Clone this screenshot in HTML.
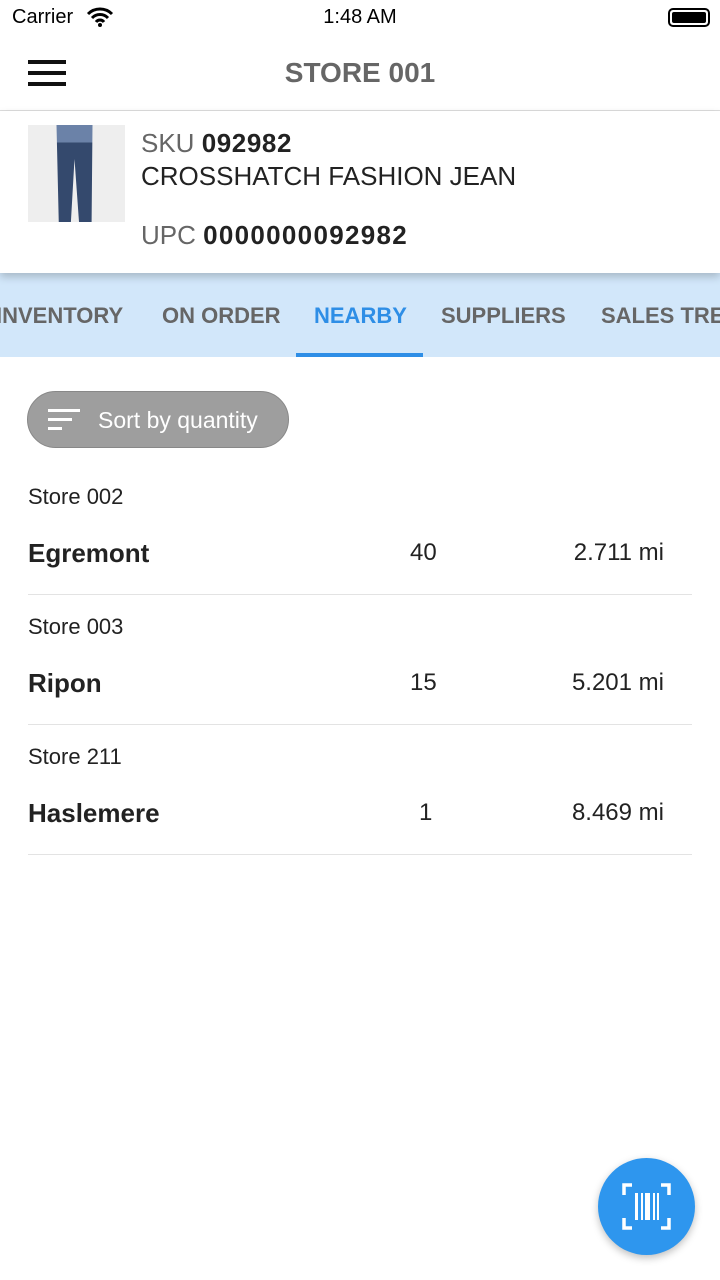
<!DOCTYPE html><html><head><meta charset="utf-8"><style>
*{margin:0;padding:0;box-sizing:border-box}
body{width:720px;height:1280px;overflow:hidden;background:#fff;font-family:"Liberation Sans",sans-serif;position:relative}
.abs{position:absolute}
</style></head><body>
<div class="abs" style="left:12px;top:6px;font-size:20px;color:#000">Carrier</div>
<svg class="abs" style="left:86px;top:6px" width="28" height="22" viewBox="0 0 28 22"><path d="M2 8a17 17 0 0 1 24 0M6 12a11 11 0 0 1 16 0M10 16a5 5 0 0 1 8 0" stroke="#000" stroke-width="3" fill="none"/><circle cx="14" cy="19" r="2" fill="#000"/></svg>
<div class="abs" style="left:0;width:720px;text-align:center;top:6px;font-size:20px;color:#000">1:48 AM</div>
<div class="abs" style="left:668px;top:8px;width:42px;height:19px;border:2px solid #000;border-radius:5px;padding:2px"><div style="width:100%;height:100%;background:#000;border-radius:2px"></div></div>
<div class="abs" style="left:28px;top:60px;width:38px;height:4px;background:#111;box-shadow:0 11px 0 #111,0 22px 0 #111"></div>
<div class="abs" style="left:0;width:720px;text-align:center;top:57px;font-size:28px;font-weight:bold;color:#666">STORE 001</div>
<div class="abs" style="left:0;top:110px;width:720px;height:1px;background:#ddd"></div>
<div class="abs" style="left:0;top:111px;width:720px;height:162px;background:#fff;box-shadow:0 4px 8px rgba(0,0,0,.2);z-index:2">
<div class="abs" style="left:28px;top:14px;width:97px;height:97px;background:#eee"><div class="abs" style="left:24px;top:0;width:45px;height:97px;background:linear-gradient(#6b82a8 0 18%,#34496d 18%);clip-path:polygon(10% 0,90% 0,88% 100%,60% 100%,50% 35%,42% 100%,15% 100%)"></div></div>
<div class="abs" style="left:141px;top:17px;font-size:26px;color:#666">SKU <b style="color:#222;letter-spacing:.6px">092982</b></div>
<div class="abs" style="left:141px;top:50px;font-size:26px;color:#222">CROSSHATCH FASHION JEAN</div>
<div class="abs" style="left:141px;top:109px;font-size:26px;color:#666">UPC <b style="color:#222;letter-spacing:1.3px">0000000092982</b></div>
</div>
<div class="abs" style="left:0;top:273px;width:720px;height:84px;background:#d2e7fa;font-size:22px;font-weight:bold;color:#666;overflow:hidden">
<div class="abs" style="left:-4px;top:30px">INVENTORY</div>
<div class="abs" style="left:162px;top:30px">ON ORDER</div>
<div class="abs" style="left:314px;top:30px;color:#2e8ee6">NEARBY</div>
<div class="abs" style="left:441px;top:30px">SUPPLIERS</div>
<div class="abs" style="left:601px;top:30px;white-space:nowrap">SALES TREND</div>
<div class="abs" style="left:296px;top:80px;width:127px;height:4px;background:#2e8ee6"></div>
</div>
<div class="abs" style="left:27px;top:391px;width:262px;height:57px;border-radius:29px;background:#9e9e9e;border:1px solid #888">
<div class="abs" style="left:20px;top:17px;width:32px;height:3px;background:#fff"></div>
<div class="abs" style="left:20px;top:26px;width:24px;height:3px;background:#fff"></div>
<div class="abs" style="left:20px;top:35px;width:14px;height:3px;background:#fff"></div>
<div class="abs" style="left:70px;top:15px;font-size:23px;color:#fff">Sort by quantity</div>
</div>
<div class="abs" style="left:28px;top:484px;width:664px">
<div style="height:111px;border-bottom:1px solid #e3e3e3;position:relative"><div class="abs" style="top:0;font-size:22px;color:#222">Store 002</div><div class="abs" style="top:54px;font-size:26px;font-weight:bold;color:#222">Egremont</div><div class="abs" style="top:55px;left:382px;font-size:24px;color:#222">40</div><div class="abs" style="top:55px;right:28px;font-size:24px;color:#222">2.711 mi</div></div>
<div style="height:130px;border-bottom:1px solid #e3e3e3;position:relative"><div class="abs" style="top:19px;font-size:22px;color:#222">Store 003</div><div class="abs" style="top:73px;font-size:26px;font-weight:bold;color:#222">Ripon</div><div class="abs" style="top:74px;left:382px;font-size:24px;color:#222">15</div><div class="abs" style="top:74px;right:28px;font-size:24px;color:#222">5.201 mi</div></div>
<div style="height:130px;border-bottom:1px solid #e3e3e3;position:relative"><div class="abs" style="top:19px;font-size:22px;color:#222">Store 211</div><div class="abs" style="top:73px;font-size:26px;font-weight:bold;color:#222">Haslemere</div><div class="abs" style="top:74px;left:391px;font-size:24px;color:#222">1</div><div class="abs" style="top:74px;right:28px;font-size:24px;color:#222">8.469 mi</div></div>
</div>
<div class="abs" style="left:598px;top:1158px;width:97px;height:97px;border-radius:50%;background:#2e96ee;box-shadow:0 3px 8px rgba(0,0,0,.25)">
<svg class="abs" style="left:24px;top:25px" width="49" height="47" viewBox="0 0 49 47"><path d="M2 12V2h8M39 2h8v10M47 35v10h-8M10 45H2V35" stroke="#fff" stroke-width="3.5" fill="none"/><rect x="13" y="10" width="3" height="27" fill="#fff"/><rect x="19" y="10" width="2" height="27" fill="#fff"/><rect x="23" y="10" width="5" height="27" fill="#fff"/><rect x="31" y="10" width="2" height="27" fill="#fff"/><rect x="35" y="10" width="2" height="27" fill="#fff"/></svg>
</div>
</body></html>
